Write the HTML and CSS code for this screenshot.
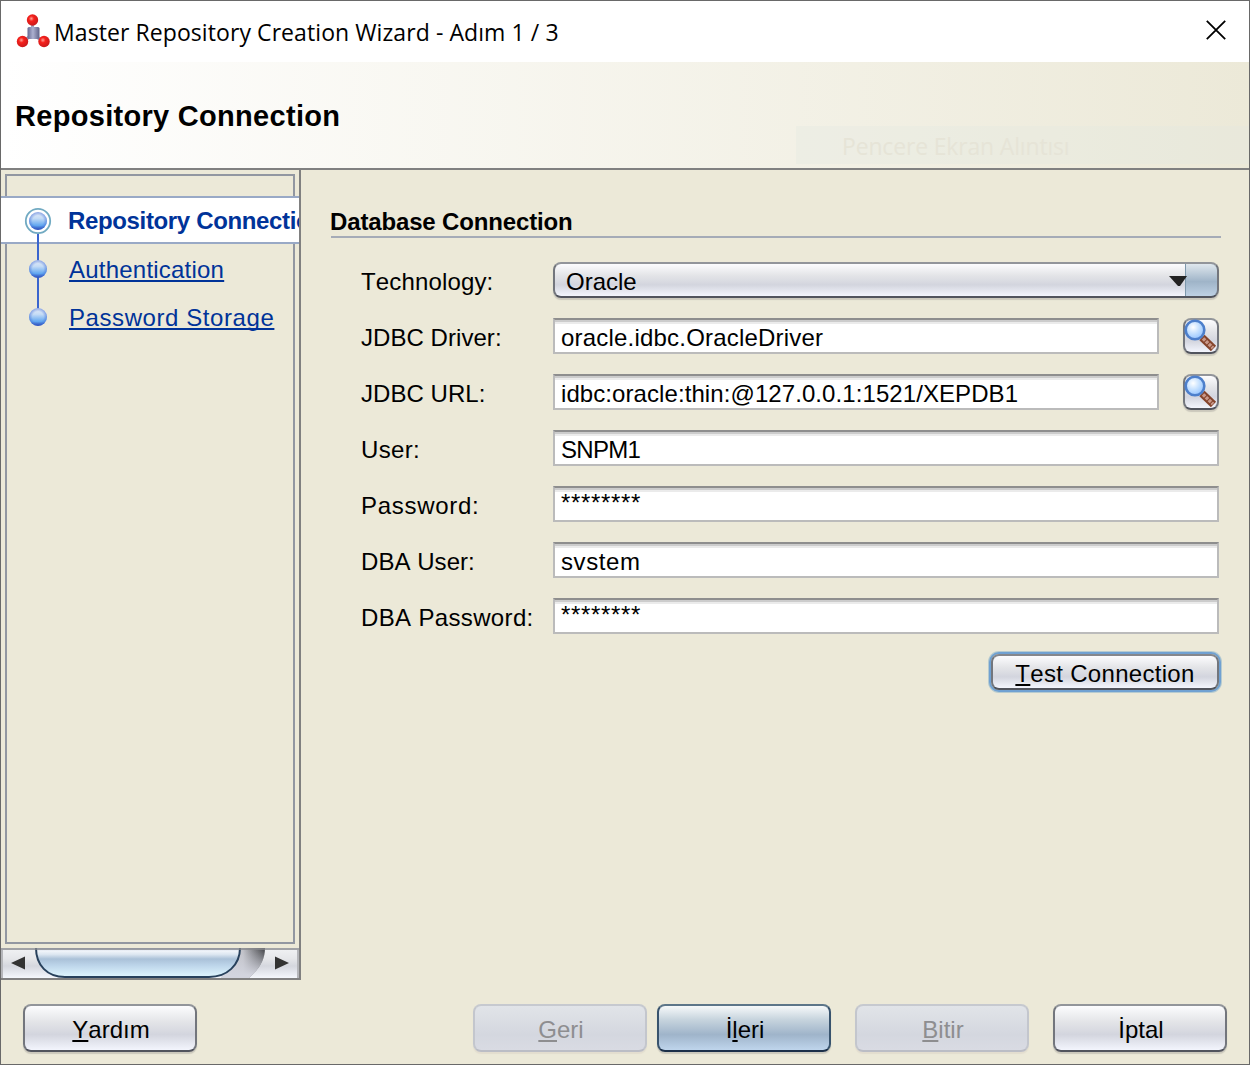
FILE: index.html
```html
<!DOCTYPE html>
<html lang="tr">
<head>
<meta charset="utf-8">
<title>Master Repository Creation Wizard</title>
<link rel="stylesheet" href="styles.css">
</head>
<body>
<svg width="0" height="0" class="defs" aria-hidden="true">
  <defs>
    <radialGradient id="red" cx=".4" cy=".38" r=".65"><stop offset="0" stop-color="#ffa196"/><stop offset=".35" stop-color="#f5211c"/><stop offset="1" stop-color="#c8191b"/></radialGradient>
    <linearGradient id="cube"><stop offset="0" stop-color="#656a94"/><stop offset=".45" stop-color="#acb0cf"/><stop offset="1" stop-color="#5f6389"/></linearGradient>
    <linearGradient id="ball" x2="0" y2="1"><stop offset="0" stop-color="#e6ecf7"/><stop offset=".35" stop-color="#c5dcf6"/><stop offset=".75" stop-color="#62a7f0"/><stop offset="1" stop-color="#233fae"/></linearGradient>
    <radialGradient id="ballEdge"><stop offset=".6" stop-color="#3d68d4" stop-opacity="0"/><stop offset="1" stop-color="#3d68d4" stop-opacity=".55"/></radialGradient>
    <radialGradient id="lens" cx=".4" cy=".35" r=".7"><stop offset="0" stop-color="#fff"/><stop offset=".5" stop-color="#c4e0ff"/><stop offset="1" stop-color="#8fc0ff"/></radialGradient>
    <linearGradient id="trackEnd"><stop offset="0" stop-color="#cfd0d6"/><stop offset=".5" stop-color="#bfc0c6"/><stop offset="1" stop-color="#3c3d40"/></linearGradient>
    <linearGradient id="trackFade" x2="0" y2="1"><stop offset="0" stop-color="#d2d4de" stop-opacity="0"/><stop offset=".9" stop-color="#d2d4de"/></linearGradient>
    <linearGradient id="thumb" x2="0" y2="1"><stop offset="0" stop-color="#b4bed2"/><stop offset=".1" stop-color="#f1f5fa"/><stop offset=".22" stop-color="#dde7f1"/><stop offset=".38" stop-color="#aac1d8"/><stop offset=".6" stop-color="#bdd5ea"/><stop offset="1" stop-color="#e0f7ff"/></linearGradient>
    <symbol id="magnifier" viewBox="0 0 36 36">
      <path d="M19 19.500l11.500 11" stroke="#85442b" stroke-width="7.500"/>
      <path d="M20 20.500l10 9.500" stroke="#c9998a" stroke-width="3.500" stroke-dasharray="3 1"/>
      <circle cx="12" cy="12" r="9.300" fill="url(#lens)" stroke="#4d7fcb" stroke-width="2.600"/>
    </symbol>
  </defs>
</svg>
<div class="window">
  <header class="titlebar">
    <svg class="app-icon" width="32" height="32" viewBox="0 0 32 32">
      <path d="M15.500 9v7M12 22l-6 5M20 22l6 5" stroke="#9ea2be" stroke-width="3"/>
      <rect x="10.500" y="12" width="12" height="12" rx="1.500" fill="url(#cube)"/>
      <circle cx="15.500" cy="5" r="5.700" fill="url(#red)"/>
      <circle cx="5.500" cy="26.500" r="5.700" fill="url(#red)"/>
      <circle cx="27" cy="26.500" r="5.700" fill="url(#red)"/>
    </svg>
    <span class="title">Master Repository Creation Wizard - Adım 1 / 3</span>
    <svg class="close" width="20" height="20" viewBox="0 0 20 20"><path d="M.8.800l18.400 18.400M19.200.8L.8 19.200" stroke="#000" stroke-width="1.800"/></svg>
  </header>
  <div class="banner">
    <h1>Repository Connection</h1>
    <div class="ghost">Pencere Ekran Alıntısı</div>
  </div>
  <div class="body">
    <nav class="sidebar">
      <div class="steps">
        <div class="step current">Repository Connection</div>
        <div class="step"><span class="link auth">Authentication</span></div>
        <div class="step"><span class="link storage">Password Storage</span></div>
        <svg class="rail" width="28" height="122" viewBox="0 0 28 122">
          <path d="M14 27v84" stroke="#3a65ce" stroke-width="2"/>
          <circle cx="14" cy="14" r="12.200" fill="#fff" stroke="#71aac2" stroke-width="1.800"/>
          <g fill="url(#ball)"><circle cx="14" cy="14" r="9"/><circle cx="14" cy="62" r="9"/><circle cx="14" cy="110" r="9"/></g>
          <g fill="url(#ballEdge)"><circle cx="14" cy="14" r="9"/><circle cx="14" cy="62" r="9"/><circle cx="14" cy="110" r="9"/></g>
        </svg>
      </div>
      <svg class="scroll" width="298" height="30" viewBox="0 0 298 30">
        <path d="M234 0H264C264 12 258 21 248 30H220z" fill="url(#trackEnd)"/>
        <path d="M234 0H264C264 12 258 21 248 30H220z" fill="url(#trackFade)"/>
        <path d="M35 0C35 17 46 29 64 29H208C226 29 239 17 239 0" fill="url(#thumb)" stroke="#28415c" stroke-width="2"/>
        <path d="M10 15l14-6.500v13zM288 15l-14-6.500v13z" fill="#333"/>
        <path d="M0 1H298" stroke="#85878c" stroke-opacity=".75" stroke-width="2"/>
        <path d="M1 2V30M297 2V30" stroke="#b5b6ba" stroke-width="2"/>
      </svg>
    </nav>
    <main class="content">
      <h2>Database Connection</h2>
      <div class="form">
        <label class="tech">Technology:</label>
        <div class="combo"><span>Oracle</span><svg width="18" height="10" viewBox="0 0 18 10"><path d="M0 0h18L11 10H9z" fill="#222"/></svg><i></i></div>
        <label class="jdbc">JDBC Driver:</label>
        <div class="pair"><div class="field">oracle.idbc.OracleDriver</div><div class="search"><svg width="36" height="36"><use href="#magnifier"/></svg></div></div>
        <label class="jdbc">JDBC URL:</label>
        <div class="pair"><div class="field url">idbc:oracle:thin:@127.0.0.1:1521/XEPDB1</div><div class="search"><svg width="36" height="36"><use href="#magnifier"/></svg></div></div>
        <label>User:</label>
        <div class="field user">SNPM1</div>
        <label class="password">Password:</label>
        <div class="field secret">********</div>
        <label class="jdbc">DBA User:</label>
        <div class="field system">svstem</div>
        <label>DBA Password:</label>
        <div class="field secret">********</div>
      </div>
      <div class="button test"><span><u>T</u>est Connection</span></div>
    </main>
  </div>
  <footer class="actions">
    <div class="button help"><span><u>Y</u>ardım</span></div>
    <div class="button disabled"><span><u>G</u>eri</span></div>
    <div class="button primary"><span>İ<u>l</u>eri</span></div>
    <div class="button disabled finish"><span><u>B</u>itir</span></div>
    <div class="button"><span>İptal</span></div>
  </footer>
</div>
</body>
</html>
```
FILE: styles.css
```css
* { box-sizing: border-box; }
body {
  margin: 0;
  font: 24px/36px "Liberation Sans", Arial, sans-serif;
  font-kerning: none;
  color: #000;
}
.defs { position: absolute; }
.window {
  display: flex;
  flex-direction: column;
  width: 1250px;
  height: 1065px;
  border: 1px solid #696969;
  background: #ece9d8;
  overflow: hidden;
  white-space: nowrap;
}
.titlebar {
  display: flex;
  align-items: flex-start;
  height: 61px;
  padding: 14px 23px 0 16px;
  background: #fff;
}
.app-icon { overflow: visible; }
.title {
  margin: -1px auto 0 5px;
  font: 23px/36px "Open Sans", sans-serif;
  letter-spacing: .08px;
}
.close { margin-top: 5px; }
.banner {
  display: flex;
  justify-content: space-between;
  height: 108px;
  border-bottom: 2px solid #808080;
  background: linear-gradient(90deg, #fff, #ece9d8);
}
h1 {
  margin: 36px 0 0 14px;
  font-size: 29px;
  line-height: 36px;
  letter-spacing: .3px;
}
.ghost {
  width: 453px;
  height: 38px;
  margin-top: 64px;
  padding-left: 46px;
  background: rgba(225, 232, 226, .3);
  color: #e6e4d7;
  font: 23px/40px "Open Sans", sans-serif;
  letter-spacing: -.17px;
}
.body { display: flex; height: 810px; }
.sidebar {
  width: 300px;
  border: solid #808080;
  border-width: 0 2px 2px 0;
  overflow: hidden;
}
.steps {
  position: relative;
  height: 770px;
  margin: 4px;
  padding-top: 20px;
  border: 2px solid #9297a1;
}
.step { height: 48px; padding-left: 62px; line-height: 48px; color: #039; }
.current {
  margin: 0 -6px 2px;
  padding-left: 67px;
  border: solid #99a9c6;
  border-width: 2px 0;
  background: #fff;
  font-weight: bold;
  line-height: 46px;
  letter-spacing: -.35px;
  overflow: hidden;
}
.link {
  text-decoration: underline;
  text-decoration-thickness: 2px;
  text-underline-offset: 2px;
  text-decoration-skip-ink: none;
}
.auth { letter-spacing: .22px; }
.storage { letter-spacing: .58px; }
.rail { position: absolute; left: 17px; top: 31px; }
.scroll {
  display: block;
  background: linear-gradient(#f1f2f4, #e6e7ea 35%, #d5d7de 60%, #f4f7fc);
}
.content { flex: 1; padding: 34px 28px 0 30px; }
h2 {
  height: 34px;
  margin: 0 0 24px;
  border-bottom: 2px solid #a5abb7;
  font-size: 24px;
  line-height: 35px;
  letter-spacing: -.15px;
  text-indent: -1px;
}
.form {
  display: grid;
  grid-template-columns: 192px 666px;
  grid-auto-rows: 36px;
  row-gap: 20px;
  padding-left: 30px;
}
.form label { line-height: 40px; letter-spacing: .35px; }
.form .tech { letter-spacing: .15px; }
.form .jdbc { letter-spacing: .05px; }
.form .password { letter-spacing: .7px; }
.pair { display: flex; justify-content: space-between; }
.field {
  height: 36px;
  padding-left: 6px;
  border: 2px solid #bbb;
  border-top-color: #8e8e8e;
  background: #fff;
  box-shadow: inset 0 2px #ccc, inset 0 4px #ebebeb;
  line-height: 36px;
  letter-spacing: .2px;
}
.pair .field { width: 606px; }
.field.url { letter-spacing: .08px; }
.field.user { letter-spacing: -.7px; }
.field.system { letter-spacing: .6px; }
.field.secret { line-height: 29px; letter-spacing: .66px; }
.combo, .search, .button {
  border: 2px solid #73767d;
  border-top-color: #92959a;
  border-bottom-color: #51545d;
  border-radius: 8px;
  background: linear-gradient(#fcfcfe, #e4e5e8 35%, #d3d5de 65%, #f3f5fd);
  box-shadow: 0 2px 1px #cbc8bc;
}
.combo { display: flex; height: 36px; line-height: 36px; padding-left: 11px; overflow: hidden; }
.combo svg { z-index: 1; margin: 12px -2px 0 auto; }
.combo i {
  width: 34px;
  height: 36px;
  margin: -2px -2px 0 0;
  border: 2px solid #35536e;
  border-top-color: #5e7789;
  border-left: 1px solid #7d98ac;
  border-radius: 0 8px 8px 0;
  background: linear-gradient(#dfe7ed, #9fb4c8 55%, #bed1e4);
}
.search { width: 36px; height: 36px; }
.search svg { display: block; margin: -2px; }
.button {
  width: 174px;
  height: 48px;
  text-align: center;
  text-indent: 2px;
  line-height: 47px;
}
.button u {
  text-decoration-thickness: 2px;
  text-underline-offset: 2px;
  text-decoration-skip-ink: none;
}
.test {
  width: 228px;
  height: 36px;
  margin: 20px 2px 0 auto;
  border-color: #85878c #73767d #51545d;
  box-shadow: 0 0 0 2px #70a1d2, 0 0 0 3px #b6cbd0;
  text-indent: 0;
  line-height: 36px;
  letter-spacing: .3px;
}
.actions { display: flex; padding: 24px 22px 0; }
.help { margin-right: auto; }
.primary {
  margin: 0 24px 0 10px;
  border-color: #5d7689 #38536d #1c3049;
  background: linear-gradient(#f6f9fa, #c8d5de 30%, #9fb4ca 65%, #bfd5ec);
}
.disabled {
  border-color: #c6c9cf #c3c6cd #bbbdc5;
  background: linear-gradient(#e1e4e8, #d4d7df 65%, #d9dbe3);
  box-shadow: 0 2px 1px #e3ddcf;
  color: #8e8e90;
}
.finish { margin-right: 24px; }
```
